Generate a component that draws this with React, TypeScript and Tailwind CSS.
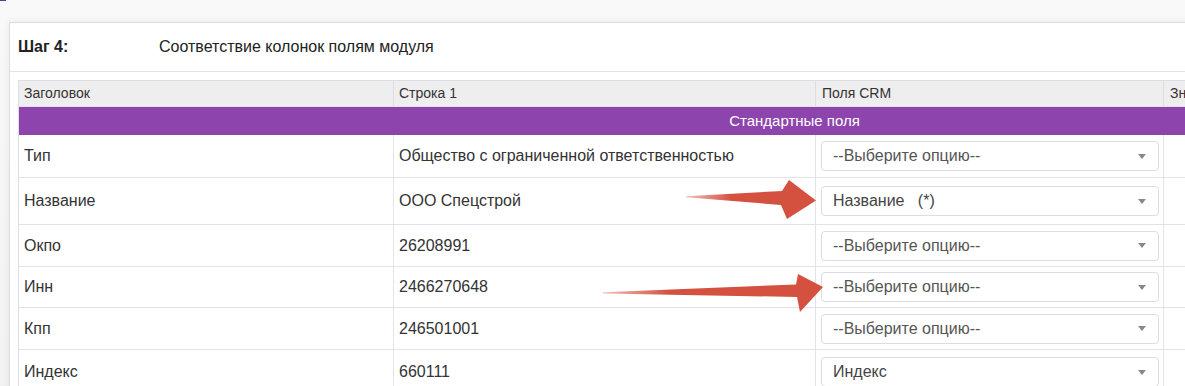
const rows = [
  { label: "Тип", value: "Общество с ограниченной ответственностью", field: "--Выберите опцию--", h: "h-[43px]" },
  { label: "Название", value: "ООО Спецстрой", field: "Название   (*)", h: "h-[47px]", selected: true },
  { label: "Окпо", value: "26208991", field: "--Выберите опцию--", h: "h-[42px]" },
  { label: "Инн", value: "2466270648", field: "--Выберите опцию--", h: "h-[41px]" },
  { label: "Кпп", value: "246501001", field: "--Выберите опцию--", h: "h-[42px]" },
  { label: "Индекс", value: "660111", field: "Индекс", h: "h-[45px]", selected: true },
];

function FieldSelect({ text, selected }: { text: string; selected?: boolean }) {
  return (
    <div className="flex h-[30px] w-[338px] items-center justify-between rounded-[4px] border border-[#dcdce2] bg-white pl-[11px] pr-[12px]">
      <span className={`whitespace-pre text-[16px] ${selected ? "text-[#444]" : "text-[#555]"}`}>{text}</span>
      <span className="h-0 w-0 border-x-[4px] border-t-[5px] border-x-transparent border-t-[#888]" />
    </div>
  );
}

export default function App() {
  return (
    <div className="relative h-[386px] w-[1185px] overflow-hidden bg-gradient-to-b from-[#f9f9f9] to-[#f3f3f3] font-['Liberation_Sans',Arial,sans-serif] text-[#333]">
      <div className="h-[1px] w-[6px] bg-[#4a3f9a]" />

      {/* Card */}
      <div className="ml-[9px] mt-[21px] w-[1600px] border border-[#dddbe7] bg-white shadow-[0_0_8px_rgba(0,0,0,0.07)]">
        {/* Step header */}
        <div className="flex h-[49px] items-center border-b border-[#e2e2ea] px-[8px] text-[16px] text-[#222]">
          <div className="w-[141px] font-bold">Шаг 4:</div>
          <div>Соответствие колонок полям модуля</div>
        </div>

        {/* Table */}
        <div className="px-[8px] pt-[8px]">
          <div className="w-[1552px] border-l border-t border-[#dddde3]">
            <div className="grid h-[26px] grid-cols-[375px_422px_348px_407px] border-b border-[#e4e4ea] bg-[#eeeeee] text-[14px] text-[#333]">
              <div className="flex items-center border-r border-[#dddde3] pl-[5px]">Заголовок</div>
              <div className="flex items-center border-r border-[#dddde3] pl-[5px]">Строка 1</div>
              <div className="flex items-center border-r border-[#dddde3] pl-[6px]">Поля CRM</div>
              <div className="flex items-center pl-[6px]">Значение по умолчанию</div>
            </div>

            <div className="flex h-[28px] items-center justify-center bg-[#8e44ad] text-[15px] text-white">
              Стандартные поля
            </div>

            {rows.map((r) => (
              <div
                key={r.label}
                className={`grid ${r.h} grid-cols-[375px_422px_348px_407px] border-b border-[#e2e2ea] text-[16px]`}
              >
                <div className="flex items-center border-r border-[#e2e2ea] pl-[5px]">{r.label}</div>
                <div className="flex items-center border-r border-[#e2e2ea] pl-[5px]">{r.value}</div>
                <div className="flex items-center border-r border-[#e2e2ea] pl-[5px]">
                  <FieldSelect text={r.field} selected={r.selected} />
                </div>
                <div />
              </div>
            ))}
          </div>
        </div>
      </div>

      {/* Annotation arrows */}
      <svg
        className="pointer-events-none absolute left-0 top-0"
        width="1185"
        height="386"
        viewBox="0 0 1185 386"
      >
        <defs>
          <linearGradient id="tail1" x1="686" y1="0" x2="816" y2="0" gradientUnits="userSpaceOnUse">
            <stop offset="0" stopColor="#d4513f" stopOpacity="0.35" />
            <stop offset="0.35" stopColor="#d4513f" />
            <stop offset="1" stopColor="#d4513f" />
          </linearGradient>
          <linearGradient id="tail2" x1="603" y1="0" x2="823" y2="0" gradientUnits="userSpaceOnUse">
            <stop offset="0" stopColor="#d4513f" stopOpacity="0.35" />
            <stop offset="0.3" stopColor="#d4513f" />
            <stop offset="1" stopColor="#d4513f" />
          </linearGradient>
        </defs>
        <polygon
          points="686,196.3 782,191 789,180 816,200.5 787,219 781,205 686,197.3"
          fill="url(#tail1)"
        />
        <polygon
          points="603,292.3 796,284.5 798,274 823,287 800,312 797,297 603,293.5"
          fill="url(#tail2)"
        />
      </svg>
    </div>
  );
}
